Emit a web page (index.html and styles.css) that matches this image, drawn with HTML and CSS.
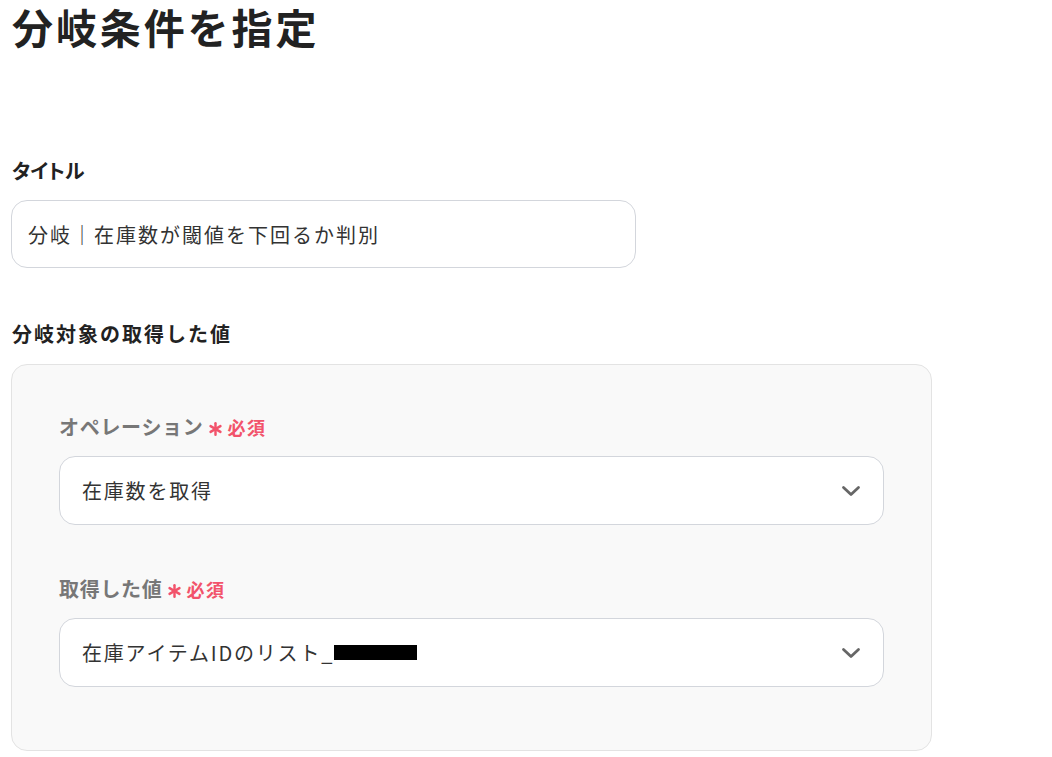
FILE: index.html
```html
<!DOCTYPE html>
<html lang="ja">
<head>
<meta charset="utf-8">
<link rel="stylesheet" href="styles.css">
</head>
<body>
<div class="page">
  <h1 class="page-title">分岐条件を指定</h1>

  <div class="field title-field">
    <div class="field-label field-label-kana">タイトル</div>
    <div class="text-input">分岐｜在庫数が閾値を下回るか判別</div>
  </div>

  <div class="field target-field">
    <div class="field-label">分岐対象の取得した値</div>
    <div class="panel">
      <div class="sub-field">
        <div class="sub-label">オペレーション<svg class="req-mark" width="15" height="14" viewBox="0 0 14 13"><g stroke="#f2536b" stroke-width="2.3" stroke-linecap="round"><line x1="7" y1="1.2" x2="7" y2="11.8"/><line x1="2.4" y1="3.85" x2="11.6" y2="9.15"/><line x1="2.4" y1="9.15" x2="11.6" y2="3.85"/></g></svg><span class="req-text">必須</span></div>
        <div class="select">
          <span class="select-text">在庫数を取得</span>
          <svg class="chevron" width="20" height="12" viewBox="0 0 20 12"><path d="M2.5 2.5 L10 9.5 L17.5 2.5" fill="none" stroke="#666" stroke-width="2.8" stroke-linecap="round" stroke-linejoin="round"/></svg>
        </div>
      </div>
      <div class="sub-field">
        <div class="sub-label">取得した値<svg class="req-mark" width="15" height="14" viewBox="0 0 14 13"><g stroke="#f2536b" stroke-width="2.3" stroke-linecap="round"><line x1="7" y1="1.2" x2="7" y2="11.8"/><line x1="2.4" y1="3.85" x2="11.6" y2="9.15"/><line x1="2.4" y1="9.15" x2="11.6" y2="3.85"/></g></svg><span class="req-text">必須</span></div>
        <div class="select">
          <span class="select-text">在庫アイテムIDのリスト_<span class="redact"></span></span>
          <svg class="chevron" width="20" height="12" viewBox="0 0 20 12"><path d="M2.5 2.5 L10 9.5 L17.5 2.5" fill="none" stroke="#666" stroke-width="2.8" stroke-linecap="round" stroke-linejoin="round"/></svg>
        </div>
      </div>
    </div>
  </div>
</div>
</body>
</html>
```

FILE: styles.css
```css
html, body {
  margin: 0;
  padding: 0;
  background: #ffffff;
}

body {
  font-family: "Noto Sans CJK JP", "Noto Sans", sans-serif;
  color: #222222;
}

.page {
  padding: 0 0 0 11px;
  width: 921px;
}

.page-title {
  margin: -4px 0 0 0;
  padding-left: 1px;
  font-size: 41px;
  line-height: 60px;
  font-weight: 700;
  letter-spacing: 2.9px;
  color: #222222;
}

.field-label {
  font-size: 20px;
  line-height: 28px;
  font-weight: 700;
  letter-spacing: 2px;
  color: #222222;
  padding-left: 1px;
}

.field-label-kana {
  font-feature-settings: "palt";
  letter-spacing: 0;
}

.title-field {
  margin-top: 101px;
}

.title-field .field-label {
  margin-bottom: 15px;
}

.text-input {
  box-sizing: border-box;
  width: 625px;
  height: 68px;
  border: 1px solid #d3d6dc;
  border-radius: 16px;
  padding: 0 16px;
  display: flex;
  align-items: center;
  font-size: 20px;
  letter-spacing: 2px;
  color: #333333;
}

.target-field {
  margin-top: 52px;
}

.target-field .field-label {
  margin-bottom: 16px;
}

.panel {
  box-sizing: border-box;
  width: 921px;
  background: #f9f9f9;
  border: 1px solid #e3e3e3;
  border-radius: 16px;
  padding: 48px 47px 63px 47px;
  display: flex;
  flex-direction: column;
  gap: 50px;
}

.sub-label {
  font-size: 20px;
  line-height: 28px;
  font-weight: 700;
  letter-spacing: 0.7px;
  color: #777777;
  display: flex;
  align-items: center;
  margin-bottom: 15px;
}

.req-mark {
  display: block;
  margin: 3px 5px 0 4px;
}

.req-text {
  color: #f2536b;
  font-size: 18px;
  font-weight: 700;
  letter-spacing: 1.5px;
}

.select {
  box-sizing: border-box;
  height: 69px;
  background: #ffffff;
  border: 1px solid #d3d6dc;
  border-radius: 16px;
  padding: 0 22px 0 22px;
  display: flex;
  align-items: center;
  justify-content: space-between;
}

.select-text {
  font-size: 20px;
  letter-spacing: 1.8px;
  color: #333333;
  display: flex;
  align-items: center;
}

.redact {
  display: inline-block;
  width: 83px;
  height: 15px;
  background: #000000;
}

.chevron {
  display: block;
}
```
